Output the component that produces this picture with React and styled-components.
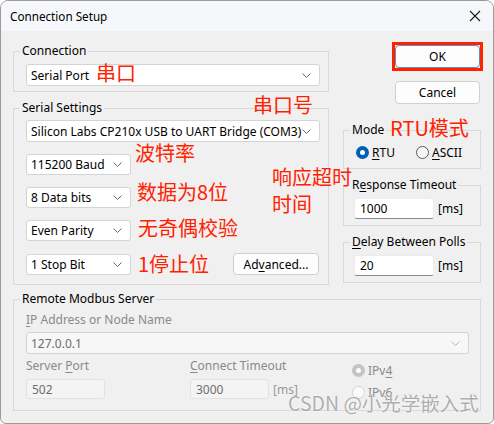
import React from 'react';
import styled, { createGlobalStyle } from 'styled-components';

const GlobalStyle = createGlobalStyle`
  html, body { margin: 0; padding: 0; background: #ffffff; }
  body { font-family: "Noto Sans", "Noto Sans CJK SC", sans-serif; font-size: 12px; color: #000; }
`;

const Window = styled.div`
  position: relative;
  width: 494px;
  height: 424px;
  box-sizing: border-box;
  border: 1px solid #9a9a9a;
  border-radius: 8px 8px 6px 6px;
  background: #f0f0f0;
  overflow: hidden;
`;

const TitleBar = styled.div`
  height: 30px;
  display: flex;
  align-items: center;
  justify-content: space-between;
  padding: 0 6px 0 9px;
  background: #f5f7fa;
`;

const Title = styled.span`
  font-size: 11.7px;
`;

const Close = styled.svg`
  width: 12px;
  height: 12px;
  margin-right: 6px;
`;

const Body = styled.div`
  padding: 12px 12px 0 12px;
  display: flex;
  flex-direction: column;
  gap: 6px;
`;

const TopRow = styled.div`
  display: flex;
  gap: 14px;
`;

const LeftCol = styled.div`
  width: 316px;
  display: flex;
  flex-direction: column;
  gap: 8px;
`;

const RightCol = styled.div`
  width: 138px;
  display: flex;
  flex-direction: column;
`;

const Group = styled.fieldset`
  margin: 0;
  margin-top: ${p => p.$mt || 0}px;
  min-width: 0;
  border: 1px solid #d9d9d9;
  padding: ${p => p.$pad || '5px 8px 5px 12px'};
  display: flex;
  flex-direction: column;
  gap: ${p => p.$gap || 0}px;
`;

const Legend = styled.legend`
  padding: 0 2px;
  margin-left: ${p => p.$shift || -6}px;
  line-height: 16px;
`;

const ComboBox = styled.div`
  box-sizing: border-box;
  width: ${p => p.$w ? p.$w + 'px' : '100%'};
  height: ${p => p.$h || 21}px;
  display: flex;
  align-items: center;
  justify-content: space-between;
  padding: 0 8px 0 4px;
  background: ${p => p.$disabled ? '#f7f7f7' : '#ffffff'};
  border: 1px solid #d4d4d4;
  border-radius: 3px;
  color: ${p => p.$disabled ? '#6d6d6d' : '#000'};
  white-space: nowrap;
`;

const Chevron = ({ color }) => (
  <svg width="9" height="5" viewBox="0 0 9 5">
    <path d="M0.5 0.5 L4.5 4.5 L8.5 0.5" fill="none" stroke={color || '#6a6a6a'} strokeWidth="1" />
  </svg>
);

const Combo = ({ children, w, h, disabled }) => (
  <ComboBox $w={w} $h={h} $disabled={disabled}>
    <span>{children}</span>
    <Chevron color={disabled ? '#b5b5b5' : undefined} />
  </ComboBox>
);

const Row = styled.div`
  display: flex;
  align-items: center;
  justify-content: space-between;
  padding-right: 1px;
`;

const Button = styled.div`
  box-sizing: border-box;
  width: ${p => p.$w || 84}px;
  height: ${p => p.$h || 23}px;
  display: flex;
  align-items: center;
  justify-content: center;
  background: #fdfdfd;
  border: 1px solid ${p => p.$default ? '#5d8fc7' : '#d0d0d0'};
  border-radius: 4px;
  margin-left: ${p => p.$ml || 0}px;
  margin-top: ${p => p.$mt || 0}px;
`;

const Highlight = styled.div`
  box-sizing: border-box;
  width: 91px;
  height: 29px;
  margin: -1px 0 0 49px;
  border: 3px solid #ff2200;
`;

const RadioRow = styled.div`
  display: flex;
  align-items: center;
  height: 16px;
`;

const RadioItem = styled.label`
  display: flex;
  align-items: center;
  gap: 3px;
  height: 16px;
  color: ${p => p.$disabled ? '#8a8a8a' : '#000'};
  width: ${p => p.$w ? p.$w + 'px' : 'auto'};
`;

const Dot = styled.span`
  box-sizing: border-box;
  width: 13px;
  height: 13px;
  border-radius: 50%;
  display: inline-block;
  border: ${p => p.$on ? `4px solid ${p.$disabled ? '#c4c4c4' : '#005fb8'}` : `1px solid ${p.$disabled ? '#d4d4d4' : '#5a5a5a'}`};
  background: ${p => p.$on ? '#fff' : (p.$disabled ? '#fafafa' : '#f6f6f6')};
`;

const U = styled.span`
  text-decoration: underline;
  text-underline-offset: 2px;
`;

const InputRow = styled.div`
  display: flex;
  align-items: center;
  gap: 4px;
`;

const TextBox = styled.div`
  box-sizing: border-box;
  width: ${p => p.$w || 80}px;
  height: ${p => p.$h || 21}px;
  display: flex;
  align-items: center;
  padding-left: ${p => p.$pl || 5}px;
  background: ${p => p.$disabled ? '#f4f4f4' : '#ffffff'};
  border: 1px solid ${p => p.$disabled ? '#e2e2e2' : '#ececec'};
  border-bottom-color: ${p => p.$disabled ? '#e2e2e2' : '#8a8a8a'};
  border-radius: 3px;
  color: ${p => p.$disabled ? '#6d6d6d' : '#000'};
`;

const Unit = styled.span`
  color: ${p => p.$disabled ? '#9a9a9a' : '#000'};
`;

const DimLabel = styled.div`
  color: #8a8a8a;
  line-height: 16px;
`;

const RemoteGrid = styled.div`
  display: grid;
  grid-template-columns: 164px 162px 1fr;
  align-items: start;
`;

const Field = styled.div`
  display: flex;
  flex-direction: column;
  gap: ${p => p.$gap || 5}px;
  padding-top: ${p => p.$pt || 0}px;
`;

const Note = styled.div`
  position: absolute;
  left: ${p => p.$x}px;
  top: ${p => p.$y}px;
  color: #ff2200;
  font-family: "Noto Sans CJK SC", sans-serif;
  font-size: 20px;
  line-height: 22px;
  white-space: nowrap;
`;

const Watermark = styled.div`
  position: absolute;
  left: 287px;
  top: 390px;
  color: #a3a3a3;
  font-family: "Noto Sans CJK SC", sans-serif;
  font-size: 19.5px;
  line-height: 24px;
  white-space: nowrap;
  text-shadow: 0 0 2px #ffffff, 0 0 1px #ffffff;
  opacity: 0.85;
`;

export default function App() {
  return (
    <>
      <GlobalStyle />
      <Window>
        <TitleBar>
          <Title>Connection Setup</Title>
          <Close viewBox="0 0 12 12">
            <path d="M1 1 L11 11 M11 1 L1 11" stroke="#1a1a1a" strokeWidth="1.1" fill="none" />
          </Close>
        </TitleBar>
        <Body>
          <TopRow>
            <LeftCol>
              <Group>
                <Legend>Connection</Legend>
                <Combo h={22}>Serial Port</Combo>
              </Group>
              <Group $pad="4px 8px 9px 12px" $gap={12}>
                <Legend>Serial Settings</Legend>
                <Combo h={22}>Silicon Labs CP210x USB to UART Bridge (COM3)</Combo>
                <Combo w={105}>115200 Baud</Combo>
                <Combo w={105}>8 Data bits</Combo>
                <Combo w={105}>Even Parity</Combo>
                <Row>
                  <Combo w={105}>1 Stop Bit</Combo>
                  <Button $w={86} $h={22}>Ad<U>v</U>anced...</Button>
                </Row>
              </Group>
            </LeftCol>
            <RightCol>
              <Highlight>
                <Button $default $w={85} $h={23}>OK</Button>
              </Highlight>
              <Button $w={85} $h={23} $ml={52} $mt={10}>Cancel</Button>
              <Group $pad="6px 8px 8px 12px" $mt={18}>
                <Legend $shift={-6}>Mode</Legend>
                <RadioRow>
                  <RadioItem $w={60}><Dot $on /><span><U>R</U>TU</span></RadioItem>
                  <RadioItem><Dot /><span><U>A</U>SCII</span></RadioItem>
                </RadioRow>
              </Group>
              <Group $pad="5px 8px 6px 10px" $mt={8}>
                <Legend $shift={-4}>R<U>e</U>sponse Timeout</Legend>
                <InputRow>
                  <TextBox $w={80}>1000</TextBox>
                  <Unit>[ms]</Unit>
                </InputRow>
              </Group>
              <Group $pad="5px 8px 6px 10px" $mt={8}>
                <Legend $shift={-4}><U>D</U>elay Between Polls</Legend>
                <InputRow>
                  <TextBox $w={80}>20</TextBox>
                  <Unit>[ms]</Unit>
                </InputRow>
              </Group>
            </RightCol>
          </TopRow>
          <Group $pad="5px 11px 10px 12px" $gap={4}>
            <Legend>Remote Modbus Server</Legend>
            <DimLabel><U>I</U>P Address or Node Name</DimLabel>
            <Combo h={22} disabled>127.0.0.1</Combo>
            <RemoteGrid>
              <Field>
                <DimLabel>Server <U>P</U>ort</DimLabel>
                <TextBox $disabled $w={79} $h={20}>502</TextBox>
              </Field>
              <Field>
                <DimLabel><U>C</U>onnect Timeout</DimLabel>
                <InputRow>
                  <TextBox $disabled $w={79} $h={20}>3000</TextBox>
                  <Unit $disabled>[ms]</Unit>
                </InputRow>
              </Field>
              <Field $gap={6} $pt={4}>
                <RadioItem $disabled><Dot $on $disabled /><span>IPv<U>4</U></span></RadioItem>
                <RadioItem $disabled><Dot $disabled /><span>IPv<U>6</U></span></RadioItem>
              </Field>
            </RemoteGrid>
          </Group>
        </Body>
        <Note $x={95} $y={61}>串口</Note>
        <Note $x={252} $y={93}>串口号</Note>
        <Note $x={134} $y={141}>波特率</Note>
        <Note $x={136} $y={180}>数据为8位</Note>
        <Note $x={137} $y={216}>无奇偶校验</Note>
        <Note $x={137} $y={252}>1停止位</Note>
        <Note $x={271} $y={165}>响应超时</Note>
        <Note $x={271} $y={192}>时间</Note>
        <Note $x={389} $y={116}>RTU模式</Note>
        <Watermark>CSDN @小光学嵌入式</Watermark>
      </Window>
    </>
  );
}
